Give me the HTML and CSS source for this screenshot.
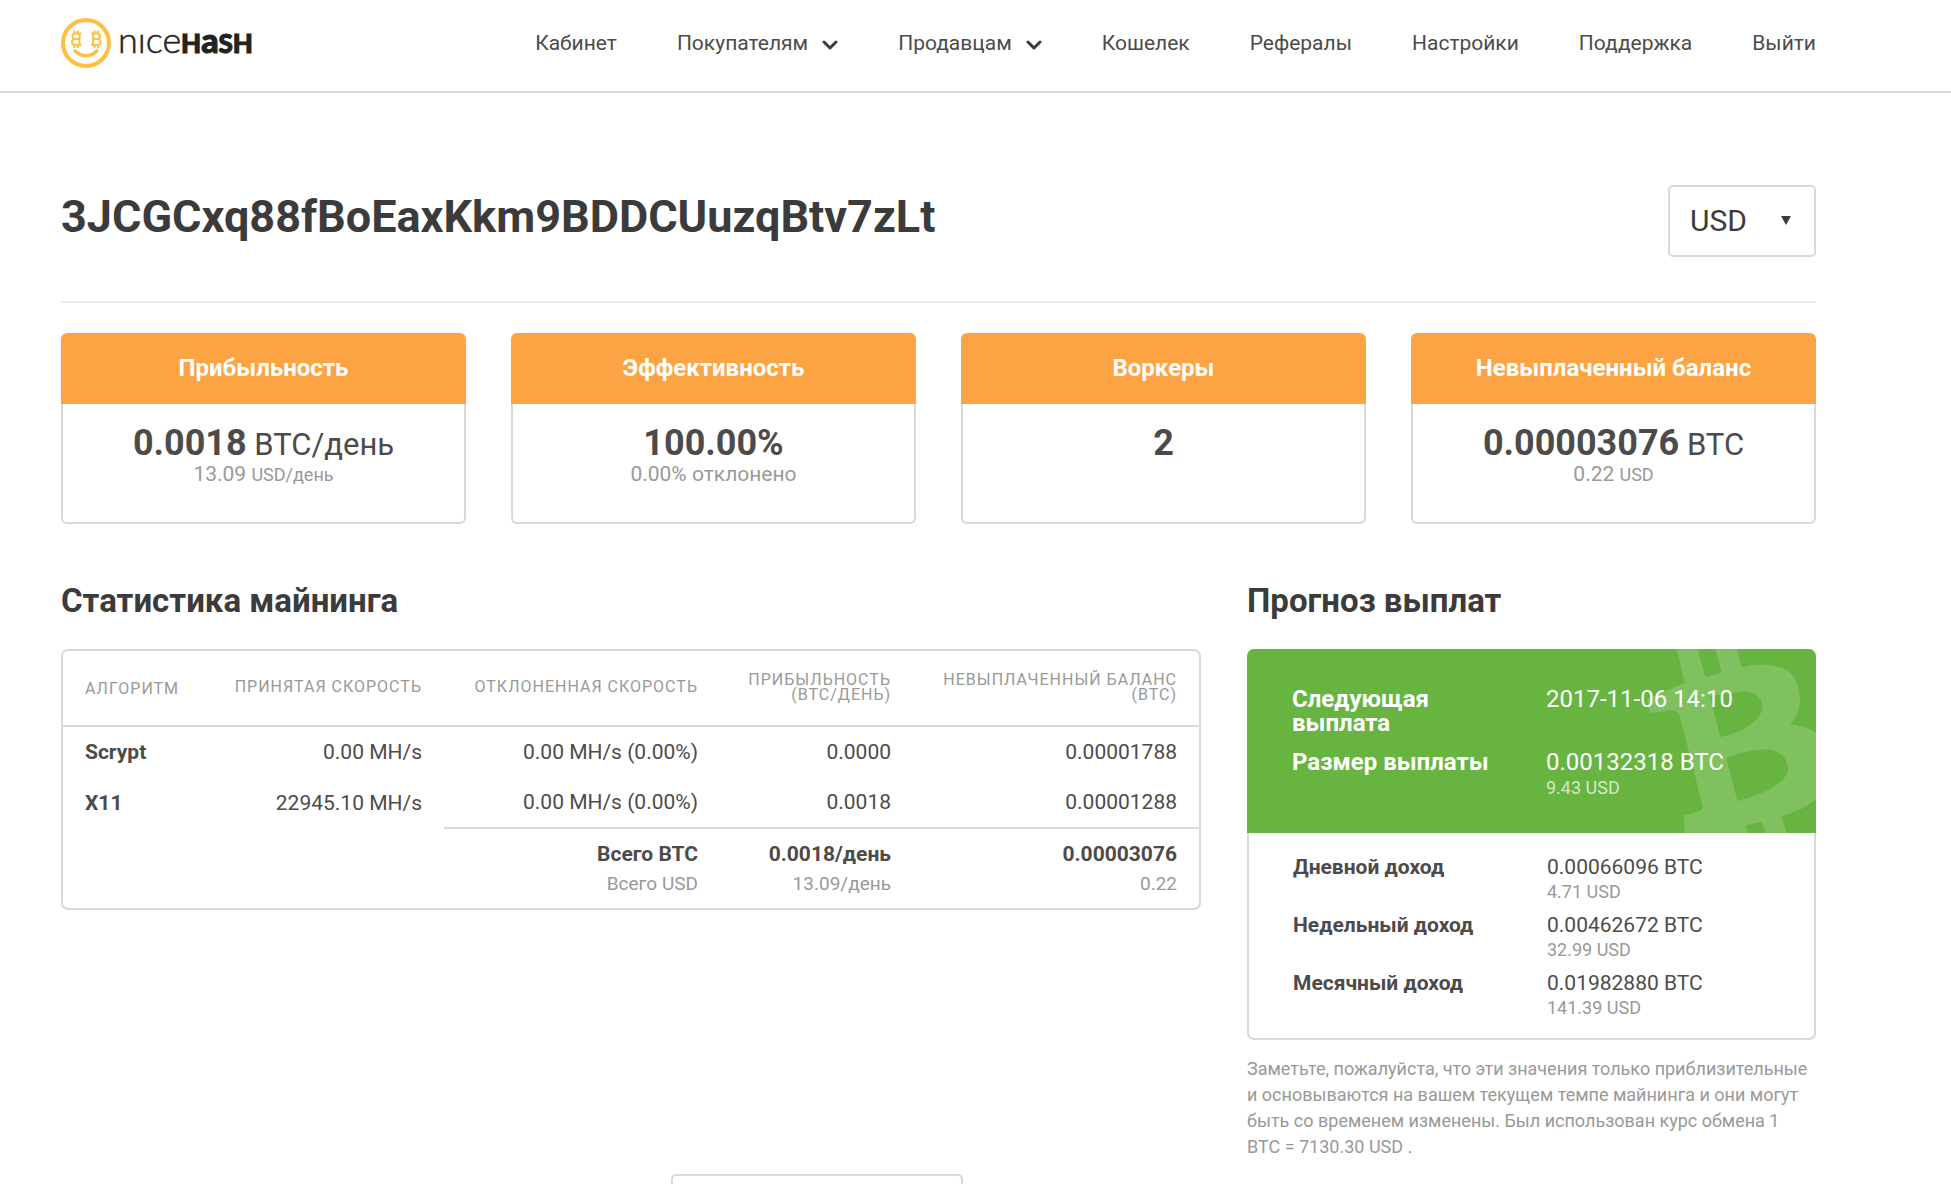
FILE: index.html
```html
<!DOCTYPE html>
<html lang="ru">
<head>
<meta charset="utf-8">
<title>NiceHash</title>
<link rel="stylesheet" href="styles.css">
</head>
<body>
<header class="header">
  <a class="logo" href="#" aria-label="NiceHash">
    <svg width="200" height="52" viewBox="0 0 200 52">
      <g fill="none" stroke="#fdc040">
        <circle cx="25" cy="26" r="23" stroke-width="4"/>
        <path d="M14 34q11 9.500 22 0" stroke-width="3.500" stroke-linecap="round"/>
        <path stroke-width="2" d="M30 16.500h6.500q2.500 0 2.500 2.500t-2.500 3q3 0 3 3t-3 3H30M32 16.500V28M32 22h5M33.500 13.500v3M37 13.500v3M33.500 28v3M37 28v3"/>
        <path stroke-width="2" d="M20.500 16.500H14q-2.500 0-2.500 2.500t2.500 3q-3 0-3 3t3 3h6.500M18.500 16.500V28M18.500 22h-5M17 13.500v3M13.500 13.500v3M17 28v3M13.500 28v3"/>
      </g>
      <text class="logo-thin" x="57" y="36">nıce</text>
      <text class="logo-bold" x="120" y="36">H<tspan class="logo-a">a</tspan>SH</text>
    </svg>
  </a>
  <nav class="nav">
    <a href="#">Кабинет</a>
    <a href="#">Покупателям<svg class="chevron" width="16" height="10" viewBox="0 0 16 10"><path d="M2 2l6 6 6-6"/></svg></a>
    <a href="#">Продавцам<svg class="chevron" width="16" height="10" viewBox="0 0 16 10"><path d="M2 2l6 6 6-6"/></svg></a>
    <a href="#">Кошелек</a>
    <a href="#">Рефералы</a>
    <a href="#">Настройки</a>
    <a href="#">Поддержка</a>
    <a href="#">Выйти</a>
  </nav>
</header>
<main class="page">
  <div class="title-row">
    <h1>3JCGCxq88fBoEaxKkm9BDDCUuzqBtv7zLt</h1>
    <div class="currency">
      <select aria-label="Валюта"><option>USD</option></select>
      <svg class="currency-arrow" width="10" height="9" viewBox="0 0 10 9"><path d="M0 0h10L5 9z"/></svg>
    </div>
  </div>
  <section class="cards">
    <article class="card">
      <h2>Прибыльность</h2>
      <div class="card-body">
        <p class="value"><b>0.0018</b> BTC/день</p>
        <p class="sub">13.09 <small>USD/день</small></p>
      </div>
    </article>
    <article class="card">
      <h2>Эффективность</h2>
      <div class="card-body">
        <p class="value"><b>100.00%</b></p>
        <p class="sub">0.00% отклонено</p>
      </div>
    </article>
    <article class="card">
      <h2>Воркеры</h2>
      <div class="card-body">
        <p class="value"><b>2</b></p>
      </div>
    </article>
    <article class="card">
      <h2>Невыплаченный баланс</h2>
      <div class="card-body">
        <p class="value"><b>0.00003076</b> BTC</p>
        <p class="sub">0.22 <small>USD</small></p>
      </div>
    </article>
  </section>
  <div class="columns">
    <section class="stats">
      <h2 class="heading">Статистика майнинга</h2>
      <div class="table-box">
        <table>
          <colgroup><col class="c1"><col class="c2"><col class="c3"><col class="c4"><col></colgroup>
          <thead>
            <tr><th>Алгоритм</th><th>Принятая скорость</th><th>Отклоненная скорость</th><th>Прибыльность (BTC/день)</th><th>Невыплаченный баланс (BTC)</th></tr>
          </thead>
          <tbody>
            <tr><th>Scrypt</th><td>0.00 MH/s</td><td>0.00 MH/s (0.00%)</td><td>0.0000</td><td>0.00001788</td></tr>
            <tr><th>X11</th><td>22945.10 MH/s</td><td>0.00 MH/s (0.00%)</td><td>0.0018</td><td>0.00001288</td></tr>
          </tbody>
          <tfoot>
            <tr><td class="blank" colspan="2"></td>
              <td><b>Всего BTC</b><span>Всего USD</span></td>
              <td><b>0.0018/день</b><span>13.09/день</span></td>
              <td><b>0.00003076</b><span>0.22</span></td></tr>
          </tfoot>
        </table>
      </div>
    </section>
    <section class="forecast">
      <h2 class="heading">Прогноз выплат</h2>
      <div class="payout">
        <dl class="next">
          <svg class="coin-bg" width="170" height="184" viewBox="30 15 510 552">
            <path fill="#7fc15f" fill-rule="evenodd" d="M122 15H185L208 100L257 86L238 15H302L317 69Q372 55 418 66C475 78 492 120 492 170Q489 215 462 242Q510 242 540 268V466Q500 500 436 517L451 567H391L376 533L328 544L335 567H147L143 515L190 502Q202 497 199 482L132 218Q124 195 103 199L42 207L33 165L146 116ZM222 156L253 279C325 265 380 225 380 185C376 160 355 141 315 143ZM271 341L304 471C390 450 456 410 456 375C455 335 425 316 385 316Q340 317 271 341Z"/>
          </svg>
          <dt>Следующая выплата</dt><dd>2017-11-06 14:10</dd>
          <dt>Размер выплаты</dt><dd>0.00132318 BTC<small>9.43 USD</small></dd>
        </dl>
        <dl class="income">
          <dt>Дневной доход</dt><dd>0.00066096 BTC<small>4.71 USD</small></dd>
          <dt>Недельный доход</dt><dd>0.00462672 BTC<small>32.99 USD</small></dd>
          <dt>Месячный доход</dt><dd>0.01982880 BTC<small>141.39 USD</small></dd>
        </dl>
      </div>
      <p class="note">Заметьте, пожалуйста, что эти значения только приблизительные и основываются на вашем текущем темпе майнинга и они могут быть со временем изменены. Был использован курс обмена 1 BTC = 7130.30 USD .</p>
    </section>
  </div>
  <div class="next-panel"></div>
</main>
</body>
</html>
```
FILE: styles.css
```css
* { box-sizing: border-box; }
body {
  margin: 0;
  font-family: Roboto, "Liberation Sans", sans-serif;
  font-size: 21px;
  color: #4d4b4a;
  background: #fff;
}
h1, h2, p, dl, dd { margin: 0; }

.header {
  display: flex;
  justify-content: space-between;
  align-items: center;
  padding: 0 135px 6px 61px;
  height: 93px;
  border-bottom: 2px solid #d9d9d9;
}
.logo { display: block; }
.logo svg { display: block; }
.logo text { font-family: Lato, sans-serif; fill: #222; }
.logo .logo-thin { font-size: 36px; font-weight: 300; stroke: #222; stroke-width: 0.5px; }
.logo .logo-bold { font-size: 26px; font-weight: 900; stroke: #222; stroke-width: 1px; }
.logo .logo-a { font-size: 34px; }
.nav { display: flex; gap: 60px; }
.nav a {
  display: flex;
  align-items: center;
  color: #4d4b4a;
  text-decoration: none;
  line-height: 24px;
}
.chevron { margin: 4px 0 0 14px; }
.chevron path {
  fill: none;
  stroke: #3b3b3b;
  stroke-width: 3;
  stroke-linecap: round;
  stroke-linejoin: round;
}

.page { padding: 92px 135px 0 61px; }
.title-row {
  display: flex;
  justify-content: space-between;
  padding-bottom: 44px;
  border-bottom: 2px solid #ebebeb;
}
h1 {
  font-size: 45px;
  line-height: 64px;
  font-weight: 700;
  color: #3b3b3b;
}
.currency { position: relative; }
.currency select {
  display: block;
  appearance: none;
  width: 148px;
  height: 72px;
  padding: 0 20px 2px;
  border: 2px solid #d9d9d9;
  border-radius: 5px;
  background: #fff;
  color: #3b3b3b;
  font-family: inherit;
  font-size: 30px;
}
.currency-arrow {
  position: absolute;
  right: 25px;
  top: 31px;
  fill: #3b3b3b;
  pointer-events: none;
}

.cards {
  display: grid;
  grid-template-columns: repeat(4, 1fr);
  gap: 45px;
  margin-top: 30px;
}
.card { display: flex; flex-direction: column; text-align: center; }
.card h2 {
  background: #fca343;
  color: #fff;
  font-size: 24px;
  line-height: 71px;
  border-radius: 6px 6px 0 0;
}
.card-body {
  flex: 1;
  padding: 21px 10px 30px;
  min-height: 120px;
  border: 2px solid #d9d9d9;
  border-top: 0;
  border-radius: 0 0 6px 6px;
}
.value { font-size: 31px; line-height: 37px; }
.value b { font-size: 36px; }
.sub { line-height: 22px; color: #999; }
.sub small { font-size: 18px; }

.columns {
  display: grid;
  grid-template-columns: 1140fr 569fr;
  gap: 46px;
  margin-top: 57px;
}
.heading {
  font-size: 33px;
  line-height: 40px;
  margin-bottom: 28px;
  color: #3b3b3b;
}
.table-box {
  border: 2px solid #d9d9d9;
  border-radius: 7px;
}
table { width: 100%; border-collapse: collapse; table-layout: fixed; }
.c1 { width: 152px; }
.c2 { width: 229px; }
.c3 { width: 276px; }
.c4 { width: 193px; }
th, td { padding: 0 22px; text-align: right; height: 51px; }
th:first-child { text-align: left; padding-right: 0; }
thead th {
  height: 75px;
  border-bottom: 2px solid #d9d9d9;
  color: #999;
  font-size: 16px;
  line-height: 15px;
  font-weight: 400;
  letter-spacing: 1px;
  text-transform: uppercase;
}
thead th:not(:first-child) { padding: 0 22px 3px 0; }
tfoot td { border-top: 2px solid #d9d9d9; height: 80px; line-height: 29px; }
tfoot .blank { border: 0; }
tfoot b, tfoot span { display: block; }
tfoot span { color: #999; font-size: 19px; }

.next, .income {
  display: grid;
  grid-template-columns: 254px 1fr;
}
.next {
  position: relative;
  overflow: hidden;
  padding: 38px 20px 31px 45px;
  row-gap: 15px;
  font-size: 24px;
  line-height: 24px;
  color: #fff;
  background: #68b441;
  border-radius: 7px 7px 0 0;
}
.coin-bg { position: absolute; right: 0; top: 0; }
.next dt, .next dd { position: relative; }
.next dt { padding-right: 40px; }
dt { font-weight: 700; }
dd small { display: block; font-size: 18px; color: #999; }
.next dd small { line-height: 28px; color: #d2e9c6; }
.income {
  padding: 21px 20px 18px 44px;
  row-gap: 8px;
  border: 2px solid #d9d9d9;
  border-top: 0;
  border-radius: 0 0 7px 7px;
  line-height: 26px;
}
.income dd small { line-height: 24px; }
.note {
  margin-top: 16px;
  color: #999;
  font-size: 18px;
  line-height: 26px;
}
.next-panel {
  width: 292px;
  height: 10px;
  margin: 14px 0 0 610px;
  border: 2px solid #d9d9d9;
  border-bottom: 0;
  border-radius: 5px 5px 0 0;
}
```
